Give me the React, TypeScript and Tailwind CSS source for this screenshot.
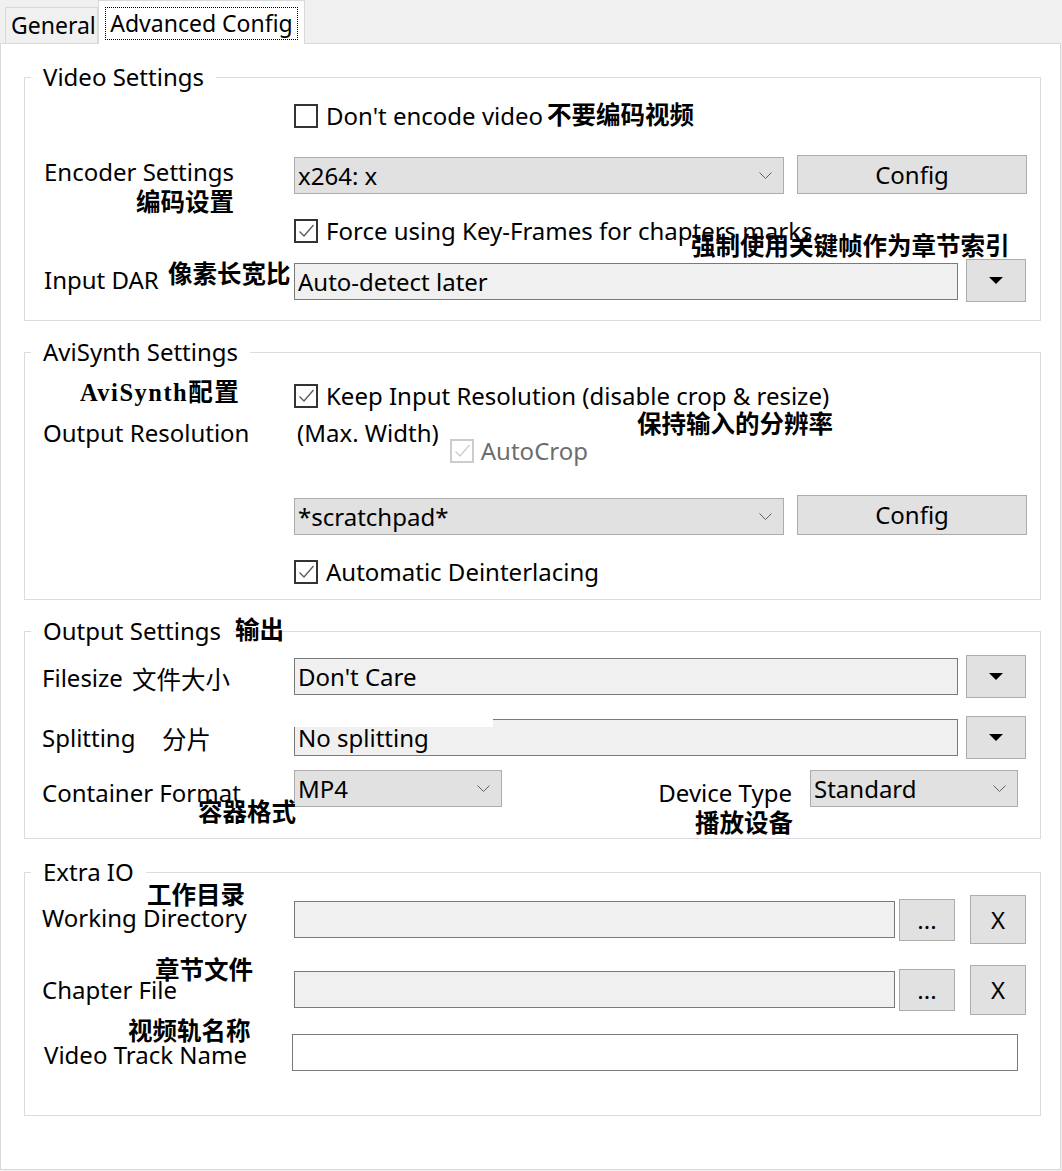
import type { ReactNode } from 'react';

const cn = (...c: (string | false | undefined)[]) => c.filter(Boolean).join(' ');

const Check = ({ checked = false, disabled = false }: { checked?: boolean; disabled?: boolean }) => (
    <span
        className={cn(
            'flex h-[24px] w-[24px] shrink-0 items-center justify-center border-2 bg-white',
            disabled ? 'border-[#cccccc]' : 'border-[#333333]'
        )}
    >
        {checked && (
            <svg width="20" height="20" viewBox="0 0 20 20" fill="none">
                <path d="M3.5 10.5 L8 15 L17.5 4" stroke={disabled ? '#cccccc' : '#5a5a5a'} strokeWidth="1.3" />
            </svg>
        )}
    </span>
);

const Combo = ({ value, className }: { value: string; className?: string }) => (
    <div className={cn('flex h-[37px] shrink-0 items-center justify-between border border-[#adadad] bg-[#e1e1e1] pl-[3px] pr-[11px]', className)}>
        <span>{value}</span>
        <svg width="13" height="7" viewBox="0 0 13 7" fill="none">
            <path d="M0.5 0.5 L6.5 6.5 L12.5 0.5" stroke="#606060" />
        </svg>
    </div>
);

const TextBox = ({ children, className }: { children?: ReactNode; className?: string }) => (
    <div className={cn('relative flex h-[37px] shrink-0 items-center border border-[#7a7a7a] pl-[3px]', className)}>
        {children}
    </div>
);

const Btn = ({ children, className }: { children?: ReactNode; className?: string }) => (
    <div className={cn('flex shrink-0 items-center justify-center border border-[#adadad] bg-[#e1e1e1]', className)}>
        {children}
    </div>
);

const Drop = ({ className }: { className?: string }) => (
    <Btn className={cn('h-[43px] w-[60px]', className)}>
        <svg width="14" height="7" viewBox="0 0 14 7">
            <path d="M0 0 H14 L7 7 Z" fill="#000" />
        </svg>
    </Btn>
);

// chinese notes pasted over the screenshot
const noteFont = "font-['Liberation_Serif','Noto_Sans_CJK_SC',serif] text-[24.5px] font-bold leading-[30px]";

const Note = ({ children, className }: { children: ReactNode; className?: string }) => (
    <span className={cn('absolute z-10 whitespace-nowrap', noteFont, className)}>{children}</span>
);

const Group = ({ title, className, children }: { title: ReactNode; className?: string; children: ReactNode }) => (
    <fieldset className={cn('relative ml-[23px] w-[1017px] border border-[#dcdcdc]', className)}>
        <legend className="ml-[6px] px-[12px] leading-[30px]">{title}</legend>
        {children}
    </fieldset>
);

export default function App() {
    return (
        <div className="h-[1171px] w-[1062px] overflow-hidden bg-[#f0f0f0] font-['Noto_Sans',sans-serif] text-[24px] text-black">
            {/* Tabs */}
            <div className="flex h-[43px] items-end pl-[5px] text-[23px]">
                <div className="flex h-[36px] w-[93px] items-center overflow-hidden border border-b-0 border-[#d9d9d9] bg-[#f0f0f0] pl-[5px]">
                    General
                </div>
                <div className="relative z-10 -mb-px flex h-[44px] w-[207px] items-start justify-center border border-b-0 border-[#d9d9d9] bg-white pt-[6px]">
                    <span className="border border-dotted border-black px-[4px] leading-[31px]">Advanced Config</span>
                </div>
            </div>

            {/* Panel */}
            <div className="h-[1127px] w-[1061px] border border-[#d9d9d9] bg-white pt-[18px]">
                {/* Video Settings */}
                <Group title="Video Settings">
                    <div className="flex h-[48px] items-center pl-[269px]">
                        <Check />
                        <span className="ml-[8px]">Don't encode video</span>
                        <span className={cn('ml-[4px]', noteFont)}>不要编码视频</span>
                    </div>
                    <div className="relative mt-[15px] flex h-[40px] items-start">
                        <div className="w-[269px] shrink-0 pl-[19px] pt-[2px] leading-[30px]">Encoder Settings</div>
                        <Note className="left-[111px] top-[33px]">编码设置</Note>
                        <Combo value="x264: x" className="mt-[2px] w-[490px]" />
                        <Btn className="ml-[13px] h-[39px] w-[230px]">Config</Btn>
                    </div>
                    <div className="relative mt-[24px] flex h-[24px] items-center pl-[269px]">
                        <Check checked />
                        <span className="ml-[8px]">Force using Key-Frames for chapters marks</span>
                        <Note className="left-[666px] top-[13px]">强制使用关键帧作为章节索引</Note>
                    </div>
                    <div className="relative mt-[16px] flex h-[43px] items-start">
                        <div className="w-[269px] shrink-0 pl-[19px] pt-[6px] leading-[30px]">Input DAR</div>
                        <Note className="left-[143px] top-[1px]">像素长宽比</Note>
                        <TextBox className="mt-[4px] w-[664px] bg-[#f0f0f0]">Auto-detect later</TextBox>
                        <Drop className="ml-[8px]" />
                    </div>
                    <div className="h-[18px]" />
                </Group>

                {/* AviSynth Settings */}
                <Group title="AviSynth Settings" className="mt-[16px]">
                    <div className="relative mt-[17px] flex h-[24px] items-center pl-[269px]">
                        <Note className="left-[55px] top-[-6px] tracking-[1.5px]">AviSynth配置</Note>
                        <Check checked />
                        <span className="ml-[8px]">Keep Input Resolution (disable crop &amp; resize)</span>
                    </div>
                    <div className="relative mt-[10px] flex h-[30px] items-start leading-[30px]">
                        <div className="w-[269px] shrink-0 pl-[18px]">Output Resolution</div>
                        <span className="ml-[3px]">(Max. Width)</span>
                        <div className="ml-[11px] mt-[18px] flex h-[30px] items-center">
                            <Check checked disabled />
                            <span className="ml-[7px] text-[#6d6d6d]">AutoCrop</span>
                        </div>
                        <Note className="left-[612px] top-[-8px]">保持输入的分辨率</Note>
                    </div>
                    <div className="mt-[47px] flex h-[40px] items-end pl-[269px]">
                        <Combo value="*scratchpad*" className="w-[490px]" />
                        <Btn className="ml-[13px] h-[40px] w-[230px]">Config</Btn>
                    </div>
                    <div className="mt-[25px] flex h-[24px] items-center pl-[269px]">
                        <Check checked />
                        <span className="ml-[8px]">Automatic Deinterlacing</span>
                    </div>
                    <div className="h-[15px]" />
                </Group>

                {/* Output Settings */}
                <Group title="Output Settings" className="mt-[16px]">
                    <Note className="left-[210px] top-[-30px]">输出</Note>
                    <div className="relative mt-[9px] flex h-[43px] items-start">
                        <div className="w-[269px] shrink-0 pl-[17px] pt-[8px] leading-[30px]">Filesize</div>
                        <Note className="left-[107px] top-[11px] font-normal">文件大小</Note>
                        <TextBox className="mt-[3px] w-[664px] bg-[#f0f0f0]">Don't Care</TextBox>
                        <Drop className="ml-[8px]" />
                    </div>
                    <div className="relative mt-[18px] flex h-[43px] items-start">
                        <div className="w-[269px] shrink-0 pl-[17px] pt-[7px] leading-[30px]">Splitting</div>
                        <Note className="left-[137px] top-[10px] font-normal">分片</Note>
                        <TextBox className="mt-[3px] w-[664px] bg-[#f0f0f0]">
                            No splitting
                            <span className="absolute -left-[2px] -top-[2px] h-[9px] w-[200px] bg-white" />
                        </TextBox>
                        <Drop className="ml-[8px]" />
                    </div>
                    <div className="relative mt-[11px] flex h-[37px] items-start">
                        <div className="w-[269px] shrink-0 pl-[17px] pt-[8px] leading-[30px]">Container Format</div>
                        <Note className="left-[173px] top-[28px]">容器格式</Note>
                        <Combo value="MP4" className="w-[208px]" />
                        <div className="flex-1" />
                        <div className="relative pt-[8px] leading-[30px]">
                            Device Type
                            <Note className="right-[-1px] top-[39px]">播放设备</Note>
                        </div>
                        <Combo value="Standard" className="ml-[18px] mr-[22px] w-[208px]" />
                    </div>
                    <div className="h-[31px]" />
                </Group>

                {/* Extra IO */}
                <Group title="Extra IO" className="mt-[18px]">
                    <div className="relative mt-[8px] flex h-[49px] items-start">
                        <div className="w-[269px] shrink-0 pl-[17px] pt-[8px] leading-[30px]">Working Directory</div>
                        <Note className="left-[122px] top-[-14px]">工作目录</Note>
                        <TextBox className="mt-[6px] w-[601px] bg-[#f0f0f0]" />
                        <Btn className="ml-[4px] mt-[4px] h-[42px] w-[56px]">...</Btn>
                        <Btn className="ml-[15px] h-[49px] w-[56px]">X</Btn>
                    </div>
                    <div className="relative mt-[21px] flex h-[50px] items-start">
                        <div className="w-[269px] shrink-0 pl-[17px] pt-[10px] leading-[30px]">Chapter File</div>
                        <Note className="left-[130px] top-[-9px]">章节文件</Note>
                        <TextBox className="mt-[6px] w-[601px] bg-[#f0f0f0]" />
                        <Btn className="ml-[4px] mt-[4px] h-[42px] w-[56px]">...</Btn>
                        <Btn className="ml-[15px] h-[50px] w-[56px]">X</Btn>
                    </div>
                    <div className="relative mt-[19px] flex h-[37px] items-start">
                        <div className="w-[267px] shrink-0 pl-[19px] pt-[6px] leading-[30px]">Video Track Name</div>
                        <Note className="left-[103px] top-[-17px]">视频轨名称</Note>
                        <TextBox className="w-[726px] bg-white" />
                    </div>
                    <div className="h-[44px]" />
                </Group>
            </div>
        </div>
    );
}
